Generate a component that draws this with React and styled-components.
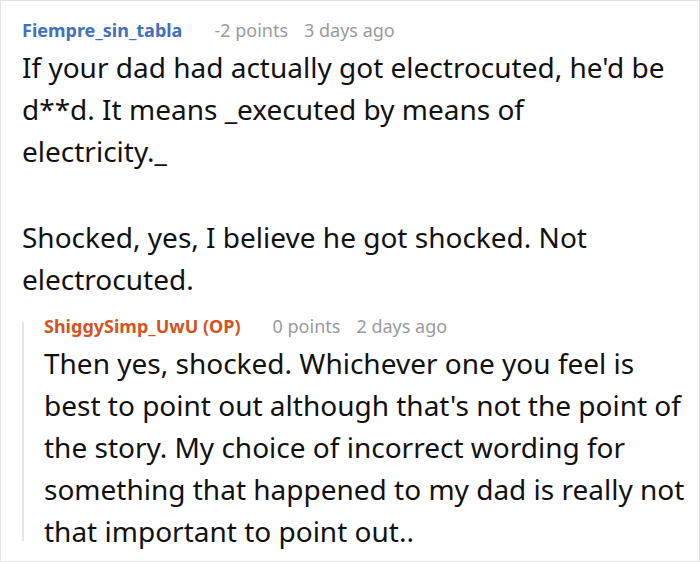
import styled, { createGlobalStyle } from 'styled-components';

const Global = createGlobalStyle`
	html, body {
		margin: 0;
		padding: 0;
		background: #fff;
	}
	* {
		box-sizing: border-box;
	}
`;

const Card = styled.div`
	width: 700px;
	height: 562px;
	border: 1px solid #e3e3e3;
	padding: 17px 14px 0 21px;
	font-family: 'Noto Sans', 'Open Sans', sans-serif;
	color: #111;
	overflow: hidden;
`;

const Meta = styled.div`
	display: flex;
	align-items: baseline;
	font-size: 18px;
	line-height: 24px;
	color: #9a9a9a;
`;

const Author = styled.span`
	font-weight: 700;
	color: ${(p) => (p.$op ? '#d4541f' : '#4070be')};
	margin-right: 32px;
`;

const Stat = styled.span`
	margin-right: 16px;
`;

const Body = styled.div`
	font-size: 28px;
	line-height: 42px;
	margin-top: 4px;
	padding-right: ${(p) => (p.$nested ? '0' : '20px')};

	p {
		margin: 0;
	}
	p + p {
		margin-top: 44px;
	}
`;

const Reply = styled.div`
	position: relative;
	margin-top: 14px;
	padding-left: 22px;

	&::before {
		content: '';
		position: absolute;
		left: 0;
		top: 8px;
		bottom: 11px;
		width: 2px;
		background: #e6e6e6;
	}
`;

const Comment = ({ author, op, nested, points, age, children }) => (
	<>
		<Meta>
			<Author $op={op}>{author}</Author>
			<Stat>{points}</Stat>
			<span>{age}</span>
		</Meta>
		<Body $nested={nested}>{children}</Body>
	</>
);

export default function App() {
	return (
		<>
			<Global />
			<Card>
				<Comment author='Fiempre_sin_tabla' points='-2 points' age='3 days ago'>
					<p>
						If your dad had actually got electrocuted, he'd be d**d. It means
						_executed by means of electricity._
					</p>
					<p>Shocked, yes, I believe he got shocked. Not electrocuted.</p>
				</Comment>
				<Reply>
					<Comment
						author='ShiggySimp_UwU (OP)'
						op
						nested
						points='0 points'
						age='2 days ago'
					>
						<p>
							Then yes, shocked. Whichever one you feel is best to point out although
							that's not the point of the story. My choice of incorrect wording for
							something that happened to my dad is really not that important to point
							out..
						</p>
					</Comment>
				</Reply>
			</Card>
		</>
	);
}
